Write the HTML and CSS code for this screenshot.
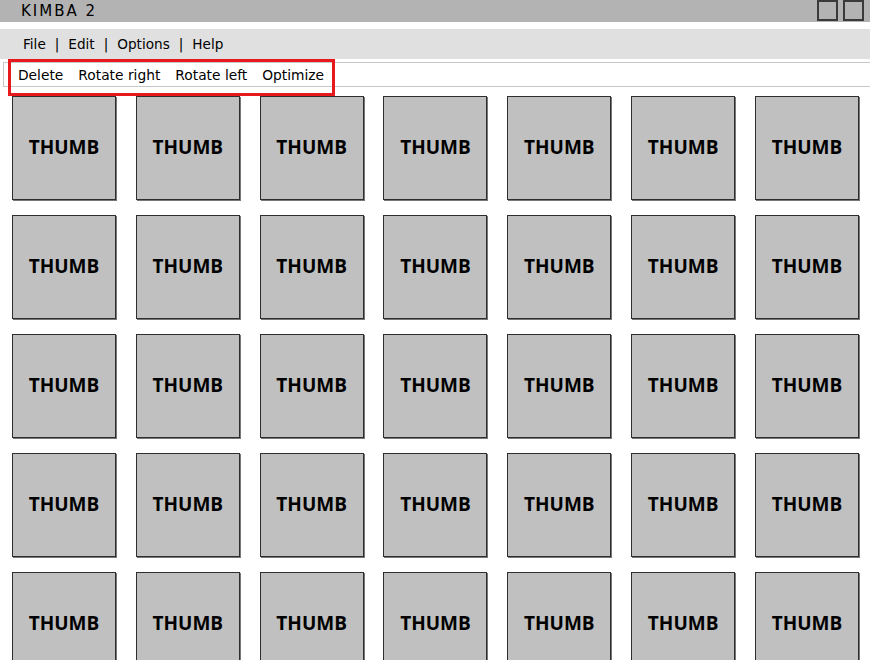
FILE: index.html
```html
<!DOCTYPE html>
<html>
<head>
<meta charset="utf-8">
<title>KIMBA 2</title>
<link rel="stylesheet" href="styles.css">
</head>
<body>
<div class="app">
  <div class="titlebar">
    <span class="title">KIMBA 2</span>
    <div class="winbtns"><span class="winbtn"></span><span class="winbtn"></span></div>
  </div>
  <div class="menubar">
    <span>File</span><span class="sep">|</span><span>Edit</span><span class="sep">|</span><span>Options</span><span class="sep">|</span><span>Help</span>
  </div>
  <div class="toolbar">
    <span>Delete</span><span>Rotate right</span><span>Rotate left</span><span>Optimize</span>
  </div>
  <div class="highlight"></div>
  <div class="grid">
    <div class="thumb">THUMB</div><div class="thumb">THUMB</div><div class="thumb">THUMB</div><div class="thumb">THUMB</div><div class="thumb">THUMB</div><div class="thumb">THUMB</div><div class="thumb">THUMB</div>
    <div class="thumb">THUMB</div><div class="thumb">THUMB</div><div class="thumb">THUMB</div><div class="thumb">THUMB</div><div class="thumb">THUMB</div><div class="thumb">THUMB</div><div class="thumb">THUMB</div>
    <div class="thumb">THUMB</div><div class="thumb">THUMB</div><div class="thumb">THUMB</div><div class="thumb">THUMB</div><div class="thumb">THUMB</div><div class="thumb">THUMB</div><div class="thumb">THUMB</div>
    <div class="thumb">THUMB</div><div class="thumb">THUMB</div><div class="thumb">THUMB</div><div class="thumb">THUMB</div><div class="thumb">THUMB</div><div class="thumb">THUMB</div><div class="thumb">THUMB</div>
    <div class="thumb">THUMB</div><div class="thumb">THUMB</div><div class="thumb">THUMB</div><div class="thumb">THUMB</div><div class="thumb">THUMB</div><div class="thumb">THUMB</div><div class="thumb">THUMB</div>
  </div>
</div>
</body>
</html>
```

FILE: styles.css
```css
html, body {
  margin: 0;
  padding: 0;
  background: #ffffff;
  overflow: hidden;
}
.app {
  position: relative;
  width: 870px;
  height: 660px;
  overflow: hidden;
  font-family: "DejaVu Sans", Verdana, sans-serif;
  color: #000;
}
.titlebar {
  height: 22px;
  background: #b3b3b3;
  display: flex;
  align-items: center;
  justify-content: space-between;
  padding: 0 6px 0 21px;
}
.title {
  font-size: 15px;
  letter-spacing: 2px;
  line-height: 22px;
}
.winbtns {
  display: flex;
  gap: 5px;
  align-self: flex-start;
  padding-top: 0;
}
.winbtn {
  width: 17px;
  height: 17px;
  border: 2px solid #3a3a3a;
  background: #b3b3b3;
  display: block;
}
.menubar {
  margin-top: 7px;
  height: 30px;
  background: #e0e0e0;
  display: flex;
  align-items: center;
  padding-left: 23px;
  font-size: 13.6px;
}
.menubar .sep {
  margin: 0 9px;
}
.toolbar {
  margin-top: 3px;
  margin-left: 3px;
  height: 23px;
  border-top: 1px solid #c8c8c8;
  border-bottom: 1px solid #c8c8c8;
  border-left: 1px solid #c8c8c8;
  display: flex;
  align-items: center;
  gap: 15px;
  padding-left: 14px;
  font-size: 13.8px;
}
.highlight {
  position: absolute;
  left: 8px;
  top: 59px;
  width: 321px;
  height: 31px;
  border: 3px solid #e8191c;
}
.grid {
  margin-top: 9px;
  margin-left: 12px;
  width: 847px;
  display: grid;
  grid-template-columns: repeat(7, 104px);
  justify-content: space-between;
  row-gap: 15px;
}
.thumb {
  width: 102px;
  height: 102px;
  border: 1px solid #2e2e2e;
  background: #c0c0c0;
  display: flex;
  align-items: center;
  justify-content: center;
  padding-bottom: 3px;
  box-sizing: content-box;
  height: 99px;
  font-family: "Open Sans", sans-serif;
  font-weight: 700;
  font-size: 19px;
  box-shadow: 1px 1px 0 #777;
}
```
